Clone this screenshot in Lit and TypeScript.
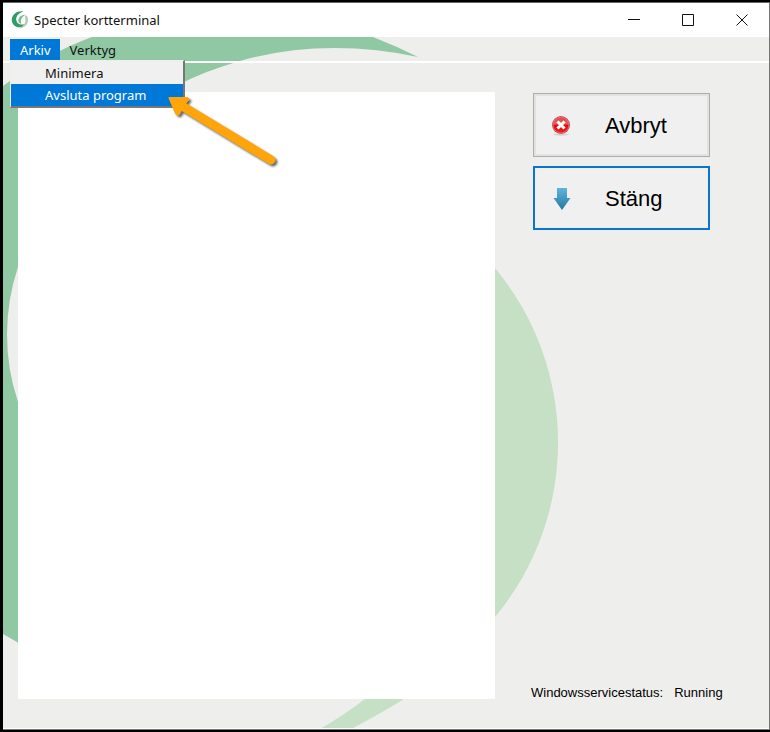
import { LitElement, html, css, svg } from "lit";
import { customElement, state } from "lit/decorators.js";

const logo = svg`
  <svg class="logo" viewBox="0 0 18 18" aria-hidden="true">
    <path d="M12.500.4C6.500-.6.8 3 .8 9C.8 13 4 16.300 8.500 16.300C11 16.300 13 15 14 13C9.500 14.800 5.500 12.500 5.200 8.500C5 5 8 1.500 12.500.4Z" fill="#2f9c63"/>
    <path d="M14.500 3.800C10.500 3.800 7.300 6.200 7.300 9.500C7.300 11.300 8.600 12.600 10.300 12.700C9.200 9.500 10.500 6 14.500 3.800Z" fill="#7dbb91"/>
    <path d="M15.500 4.200C18.500 8.500 17.500 16.500 7.500 17.600C13 15.500 15.800 11 13.800 5.800Z" fill="#a9cfae"/>
  </svg>`;

const swirl = svg`
  <svg class="swirl" viewBox="3 37 764 692" width="764" height="692" aria-hidden="true">
    <path fill="#8fc8a2" d="M3 86Q48 53 92 37H373Q396 46 418 57Q377 48 335 48Q285 48 240 61Q205 71 180 84L60 180Q32 220 18 267A213 213 0 0 0 18 402L60 500V664Q32 651 3 634Z"/>
    <path fill="#c6e0c6" d="M400 200L495 268A273 273 0 0 1 495 617L460 640L404 699Q380 714 351 729H320Q344 715 365 699L400 600Z"/>
  </svg>`;

const cancelIcon = svg`
  <svg class="icon" viewBox="0 0 20 22" aria-hidden="true">
    <defs>
      <linearGradient id="red" x1="0" y1="0" x2="0" y2="1">
        <stop offset="0" stop-color="#d94a50"/><stop offset=".45" stop-color="#e8585c"/>
        <stop offset=".5" stop-color="#dc0a10"/><stop offset="1" stop-color="#f51d1d"/>
      </linearGradient>
    </defs>
    <ellipse cx="10" cy="19.500" rx="8" ry="1.200" fill="#d3d3d3"/>
    <circle cx="10" cy="10" r="9" fill="#cf4347"/>
    <circle cx="10" cy="10" r="7.900" fill="url(#red)" stroke="#ee8c8c" stroke-width=".6"/>
    <path d="M7.500 7.500l5 5M12.500 7.500l-5 5" stroke="#fff" stroke-width="3" stroke-linecap="square"/>
  </svg>`;

const downIcon = svg`
  <svg class="icon" viewBox="0 0 20 22" aria-hidden="true">
    <defs>
      <linearGradient id="blue" x1="0" y1="0" x2="0" y2="1">
        <stop offset="0" stop-color="#60b3dc"/><stop offset="1" stop-color="#2179a0"/>
      </linearGradient>
    </defs>
    <path d="M6 0H16V10H19.500L11 22L2.500 10H6Z" fill="url(#blue)"/>
  </svg>`;

@customElement("app-root")
export class AppRoot extends LitElement {
  @state() private menuOpen = true;

  static styles = css`
    :host {
      display: block;
      font-family: "Noto Sans", "Segoe UI", sans-serif;
      font-size: 13px;
      color: #111;
    }
    * { box-sizing: border-box; }
    button { font: inherit; color: inherit; margin: 0; cursor: default; }
    svg { display: block; }
    .window {
      min-height: 100vh;
      display: flex;
      flex-direction: column;
      background: #eeeeec;
      border: solid #000;
      border-width: 2px 0 2px 3px;
    }
    .titlebar {
      display: flex;
      align-items: center;
      height: 35px;
      padding: 0 0 0 8px;
      background: #fff;
      border-top: 1px solid #666;
      border-right: 1px solid #777;
    }
    .logo { width: 18px; height: 18px; margin-right: 5px; }
    .title { flex: 1; margin: 0; font-size: 13px; font-weight: 400; }
    .control {
      width: 54px;
      height: 34px;
      padding: 0;
      border: 0;
      background: none;
      display: grid;
      place-items: center;
    }
    .control svg { width: 12px; height: 12px; fill: none; stroke: #111; }
    .client {
      position: relative;
      flex: 1;
      display: flex;
      flex-direction: column;
      overflow: hidden;
      border-right: 1px solid #777;
      border-bottom: 1px solid #777;
    }
    .swirl { position: absolute; left: 0; top: 0; }
    .menubar {
      position: relative;
      z-index: 2;
      display: flex;
      height: 26px;
      padding: 2px 7px 0;
      border-bottom: 2px solid #fff;
    }
    .entry { position: relative; }
    .entry > button {
      height: 22px;
      padding: 0 9px 0 10px;
      border: 0;
      background: none;
      line-height: 22px;
    }
    .entry > .open { background: #0078d7; color: #fff; }
    .menu {
      position: absolute;
      left: 0;
      top: 21px;
      width: 175px;
      padding-top: 1px;
      background: #f0f0f0;
      border: 1px solid #eee;
      border-right: 2px solid #777;
      border-bottom: 2px solid #777;
    }
    .menu button {
      display: block;
      width: 100%;
      height: 22px;
      padding: 0 0 0 34px;
      border: 0;
      background: none;
      text-align: left;
      line-height: 22px;
      white-space: nowrap;
    }
    .menu .selected { background: #0078d7; color: #fff; }
    .pointer {
      position: absolute;
      left: 155px;
      top: 54px;
      width: 130px;
      height: 90px;
      pointer-events: none;
      filter: drop-shadow(2px 2px 1px #0009);
    }
    .content {
      position: relative;
      flex: 1;
      display: flex;
      gap: 38px;
      padding: 29px 59px 29px 15px;
      border-bottom: 1px solid #fff;
    }
    .display { flex: 1; background: #fff; }
    .side {
      width: 177px;
      display: flex;
      flex-direction: column;
      gap: 9px;
      padding-top: 1px;
      font-family: "Liberation Sans", Arial, sans-serif;
    }
    .action {
      height: 64px;
      display: flex;
      align-items: center;
      padding: 2px 17px 0;
      background: #f0f0f0;
      border: 1px solid #adadad;
      box-shadow: inset 0 0 0 2px #e2e2e1;
      font-size: 22px;
      color: #000;
    }
    .action.focused { padding: 2px 16px 0; border: 2px solid #0a74cf; box-shadow: none; }
    .action span { padding-left: 34px; }
    .icon { width: 20px; height: 22px; }
    .status {
      display: flex;
      gap: 11px;
      margin: auto 0 0 -2px;
      line-height: 12px;
      white-space: nowrap;
      color: #000;
    }
  `;

  private toggle() {
    this.menuOpen = !this.menuOpen;
  }

  render() {
    return html`
      <main class="window">
        <header class="titlebar">
          ${logo}
          <h1 class="title">Specter kortterminal</h1>
          <button class="control" aria-label="Minimera fönster">
            <svg viewBox="0 0 12 12"><path d="M0 5.500H12"/></svg>
          </button>
          <button class="control" aria-label="Maximera fönster">
            <svg viewBox="0 0 12 12"><path d="M.5.500H11.500V11.500H.5Z"/></svg>
          </button>
          <button class="control" aria-label="Stäng fönster">
            <svg viewBox="0 0 12 12"><path d="M.5.500L11.500 11.500M11.500.500L.5 11.500"/></svg>
          </button>
        </header>
        <div class="client">
          ${swirl}
          <nav class="menubar">
            <div class="entry">
              <button class=${this.menuOpen ? "open" : ""} aria-expanded=${this.menuOpen} @click=${this.toggle}>Arkiv</button>
              ${this.menuOpen
                ? html`<div class="menu">
                    <button>Minimera</button>
                    <button class="selected">Avsluta program</button>
                  </div>
                  <svg class="pointer" viewBox="0 0 130 90" aria-hidden="true">
                    <path d="M17 13L106 67" fill="none" stroke="#ffa50a" stroke-width="9" stroke-linecap="round"/>
                    <path d="M4.500 5L22 5Q25 6 22 8L19 11L15 19L14 21Q12 22 11 20Z" fill="#ffa50a" stroke="#ffa50a" stroke-width="2" stroke-linejoin="round"/>
                  </svg>`
                : ""}
            </div>
            <div class="entry"><button>Verktyg</button></div>
          </nav>
          <div class="content">
            <section class="display" aria-label="Terminal"></section>
            <aside class="side">
              <button class="action">${cancelIcon}<span>Avbryt</span></button>
              <button class="action focused">${downIcon}<span>Stäng</span></button>
              <div class="status"><span>Windowsservicestatus:</span><span>Running</span></div>
            </aside>
          </div>
        </div>
      </main>
    `;
  }
}
